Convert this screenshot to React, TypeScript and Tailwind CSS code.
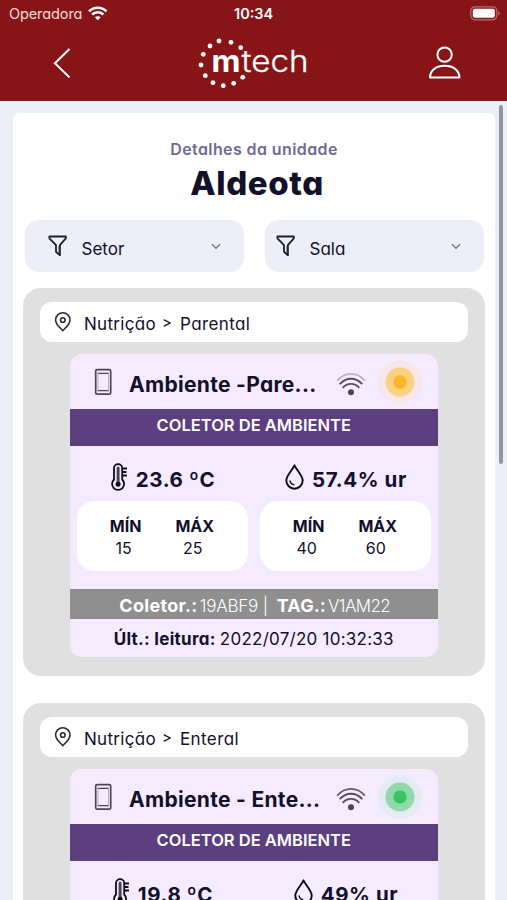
// Unit details screen: filters on top, then one group per sector / room,
// each holding the environment collector card with its latest readings.
import type { ReactNode } from "react";

type Reading = { value: string; min: string; max: string };

type Collector = {
  sector: string;
  room: string;
  name: string;
  status: "warning" | "ok";
  weakSignal: boolean;
  temperature: Reading;
  humidity: Reading;
  code: string;
  tag: string;
  lastReading: string;
};

const collectors: Collector[] = [
  {
    sector: "Nutrição",
    room: "Parental",
    name: "Ambiente -Pare...",
    status: "warning",
    weakSignal: true,
    temperature: { value: "23.6 ºC", min: "15", max: "25" },
    humidity: { value: "57.4% ur", min: "40", max: "60" },
    code: "19ABF9",
    tag: "V1AM22",
    lastReading: "2022/07/20 10:32:33",
  },
  {
    sector: "Nutrição",
    room: "Enteral",
    name: "Ambiente - Ente...",
    status: "ok",
    weakSignal: false,
    temperature: { value: "19.8 ºC", min: "15", max: "25" },
    humidity: { value: "49% ur", min: "40", max: "60" },
    code: "19ABF9",
    tag: "V1AM23",
    lastReading: "2022/07/20 10:32:33",
  },
];

export default function App() {
  return (
    <div className="relative h-[900px] w-[507px] overflow-hidden bg-[#eceef8] font-['Inter',sans-serif] whitespace-nowrap text-[#12102a] [font-feature-settings:'cv11']">
      <Header />
      <main className="mt-3 ml-[13px] w-[482px] rounded-t-md bg-white px-2.5 pt-[25px]">
        <p className="text-center text-[16px] leading-[22px] font-semibold tracking-[0.4px] text-[#6e6b96]">Detalhes da unidade</p>
        <h1 className="pt-0.5 pb-0.5 pl-1.5 text-center text-[33px] leading-[42px] font-extrabold tracking-[0.6px]">Aldeota</h1>
        <div className="mt-[14px] flex justify-between px-[1.5px]">
          <Filter label="Setor" className="pl-[23px]" />
          <Filter label="Sala" className="pl-[11px]" />
        </div>
        <div className="mt-4 flex flex-col gap-[27px]">
          {collectors.map((c) => (
            <Group key={c.room} collector={c} />
          ))}
        </div>
      </main>
      <div className="absolute top-[105px] left-[499px] h-[359px] w-1 rounded-full bg-[#93959f]" />
    </div>
  );
}

function Header() {
  return (
    <header className="h-[101px] bg-[#871417] text-white">
      <div className="flex h-[27px] items-center pr-[6px] pl-[9px]">
        <span className="w-[79px] pt-px text-[14.5px] tracking-[-0.1px] text-[#f6dcd8]">Operadora</span>
        <StatusWifi />
        <span className="ml-[126px] flex-1 pt-px text-[14.5px] font-semibold">10:34</span>
        <Battery />
      </div>
      <div className="flex h-[74px] items-start">
        <svg className="mt-[20px] ml-[52px]" width="20" height="32" viewBox="0 0 20 32" fill="none" stroke="currentColor" strokeWidth="2">
          <path d="M17.5 2 2.9 16.2 17.5 30.4" />
        </svg>
        <Logo />
        <svg className="mt-[18px] ml-[114px]" width="34" height="36" viewBox="0 0 34 36" fill="none" stroke="currentColor" strokeWidth="2">
          <circle cx="16.6" cy="9.6" r="7.2" />
          <path d="M2 32.4C2 25 8.6 20.8 16.7 20.8S31.4 25 31.4 32.4Z" strokeLinejoin="round" />
        </svg>
      </div>
    </header>
  );
}

function Filter({ label, className }: { label: string; className: string }) {
  return (
    <button className={`flex h-[52px] w-[219px] items-center rounded-[14px] bg-[#eceef8] pr-[23px] ${className}`}>
      <svg width="20" height="22" viewBox="0 0 20 22" fill="none" stroke="#1d1b30" strokeWidth="1.8" strokeLinejoin="round">
        <path d="M1.4 1.5h16.4v1.9l-5.9 6.8v10l-3.9-3.4v-6.6L1.4 3.4Z" />
        <path d="M10.6 11v7" strokeWidth="1" stroke="#8a8998" />
      </svg>
      <span className="mt-[7px] ml-[14px] flex-1 text-left text-[17px]">{label}</span>
      <svg width="10" height="7" viewBox="0 0 10 7" fill="none" stroke="#777985" strokeWidth="1.4">
        <path d="m1 1.2 4 4 4-4" />
      </svg>
    </button>
  );
}

function Group({ collector: c }: { collector: Collector }) {
  return (
    <section className="h-[388px] rounded-[18px] bg-[#e0e0e0] px-[17px] pt-[14px]">
      <div className="flex h-10 items-center rounded-[12px] bg-white pl-[14px] text-[17px]">
        <svg width="18" height="20" viewBox="0 0 18 20" fill="none" stroke="#2a293b" strokeWidth="1.6">
          <path d="M8.8 18.6C6 15.8 1.6 12.4 1.6 8a7.2 7.2 0 0 1 14.4 0c0 4.4-4.4 7.8-7.2 10.6Z" />
          <circle cx="8.8" cy="8" r="2.3" />
        </svg>
        <span className="mt-[5px] ml-3 w-[78px] tracking-[0.3px]">{c.sector}</span>
        <span className="mt-[3px] w-[18px] text-[15px]">&gt;</span>
        <span className="mt-[5px] tracking-[0.4px]">{c.room}</span>
      </div>

      <article className="mt-3 ml-[30px] h-[303px] w-[367.5px] overflow-hidden rounded-[12px] bg-[#f5ebfe]">
        <div className="flex h-[55px] items-center pl-6">
          <DeviceIcon />
          <span className="mt-[6px] ml-4 w-[207px] text-[21px] font-bold tracking-[0.3px]">{c.name}</span>
          <SignalIcon weak={c.weakSignal} />
          <StatusDot status={c.status} />
        </div>
        <div className="h-[37px] bg-[#5c3f7f] text-center text-[16.5px] leading-[33px] font-semibold text-white">COLETOR DE AMBIENTE</div>
        <div className="flex gap-3 px-[6.5px]">
          <Metric icon={<ThermometerIcon />} reading={c.temperature} />
          <Metric icon={<DropIcon />} reading={c.humidity} />
        </div>
        <div className="mt-[18px] flex h-[30px] items-center justify-center bg-[#8f8f8f] pt-0.5 pl-0.5 text-white">
          <span className="pr-0.5 text-[18px] font-bold tracking-[0.3px]">Coletor.:</span>
          <span className="pt-[3px] text-[17px] font-light tracking-[-0.2px]">{c.code} |</span>
          <span className="ml-[9px] pr-0.5 text-[18px] font-bold tracking-[0.1px]">TAG.:</span>
          <span className="pt-[3px] text-[17px] font-light tracking-[-0.6px]">{c.tag}</span>
        </div>
        <div className="flex h-[38px] items-center justify-center gap-1 pt-1 text-[17px]">
          <b className="tracking-[0.3px]">Últ.: leitura:</b>
          <span className="tracking-[0.25px]">{c.lastReading}</span>
        </div>
      </article>
    </section>
  );
}

function Metric({ icon, reading }: { icon: ReactNode; reading: Reading }) {
  return (
    <div className="w-[171px]">
      <div className="flex h-[55px] items-center justify-center gap-2 pt-[7px] pl-0.5">
        {icon}
        <span className="pt-1.5 text-[20.5px] font-bold tracking-[0.6px]">{reading.value}</span>
      </div>
      <div className="flex h-[70px] justify-center gap-[34px] rounded-[18px] bg-white pt-[14px] text-center leading-[22px]">
        <div>
          <p className="text-[16px] font-bold">MÍN</p>
          <p className="pr-1 text-[16px]">{reading.min}</p>
        </div>
        <div>
          <p className="text-[16px] font-bold">MÁX</p>
          <p className="pr-1 text-[16px]">{reading.max}</p>
        </div>
      </div>
    </div>
  );
}

function Logo() {
  const dots = [
    [21, 14], [33, 15.3], [42.7, 20.7], [12, 19], [5.3, 27.3], [3, 38],
    [7.3, 48.7], [15, 55.7], [25.3, 58.7], [35.7, 56.3], [44.7, 50.3],
  ];
  return (
    <svg className="ml-[126px]" width="116" height="70" viewBox="0 0 116 70" fill="white">
      {dots.map(([x, y]) => (
        <circle key={`${x}-${y}`} cx={x} cy={y} r="2.4" />
      ))}
      <text x="13.5" y="45" fontSize="30" fontWeight="700" textLength="29" lengthAdjust="spacingAndGlyphs">m</text>
      <text x="43.5" y="45" fontSize="30" fontWeight="300" stroke="white" strokeWidth=".3" textLength="67" lengthAdjust="spacingAndGlyphs">tech</text>
    </svg>
  );
}

function StatusWifi() {
  return (
    <svg width="20" height="15" viewBox="0 0 20 15" fill="none" stroke="white" strokeWidth="2.5">
      <path d="M1 5.3C6 .5 13.5.5 18.5 5.3" />
      <path d="M4.1 8.5c3.3-3 8-3 11.3 0" />
      <path d="M9.75 14.3 6.8 11.3c1.7-1.5 4.2-1.5 5.9 0Z" fill="white" stroke="none" />
    </svg>
  );
}

function Battery() {
  return (
    <svg width="31" height="15" viewBox="0 0 31 15" fill="none">
      <rect x=".8" y=".8" width="26" height="13" rx="4" stroke="#bd6f70" strokeWidth="1.2" />
      <rect x="2.8" y="2.8" width="22" height="9" rx="2" fill="white" />
      <path d="M28.3 5c2 .8 2 3.8 0 4.6Z" fill="#bd6f70" />
    </svg>
  );
}

function DeviceIcon() {
  return (
    <svg width="19" height="28" viewBox="0 0 19 28" fill="none" stroke="#4d4556">
      <rect x="1.7" y="1.7" width="15" height="24.5" rx="1.5" strokeWidth="1.7" />
      <path d="M3.5 5.3h11.4M3.5 22.6h11.4" strokeWidth="1.3" />
      <path d="M4 5v18M14.5 5v18" stroke="#a79daf" strokeWidth=".8" />
    </svg>
  );
}

function SignalIcon({ weak }: { weak: boolean }) {
  return (
    <svg className="mt-1" width="30" height="24" viewBox="0 0 30 24" fill="none" stroke="#554d5e" strokeWidth="1.8">
      <path d="M1.2 8.6c7.8-9 19.8-9 27.6 0" stroke={weak ? "#b9b0c0" : "#665e6d"} />
      <path d="M3.7 12.2c6.5-7.3 16.1-7.3 22.6 0" />
      <path d="M6.7 15.8c4.7-5.2 11.9-5.2 16.6 0" />
      <circle cx="15" cy="20.3" r="3" fill="#4d4556" stroke="none" />
    </svg>
  );
}

function StatusDot({ status }: { status: Collector["status"] }) {
  const [halo, ring, core] = status === "ok" ? ["#e5ebf2", "#91d8ab", "#3bc466"] : ["#f7e6ea", "#f9d182", "#fbb824"];
  return (
    <svg className="ml-3" width="44" height="44" viewBox="0 0 44 44">
      <circle cx="22" cy="22" r="22" fill={halo} />
      <circle cx="22" cy="22" r="14.5" fill={ring} />
      <circle cx="22" cy="22" r="6.7" fill={core} />
    </svg>
  );
}

function ThermometerIcon() {
  return (
    <svg width="17" height="28" viewBox="0 0 17 28" fill="none" stroke="#0d0b18" strokeWidth="1.8">
      <path d="M3 16.5V5.3a4.1 4.1 0 0 1 8.2 0v11.2a6 6 0 1 1-8.2 0Z" />
      <path d="M7.1 5v16" stroke="#4a4555" strokeWidth="3" strokeLinecap="round" />
      <circle cx="7.1" cy="21.2" r="2.5" fill="#0d0b18" stroke="none" />
      <path d="M11 5.5h5M11 9h4.5M11 12.5h5" />
    </svg>
  );
}

function DropIcon() {
  return (
    <svg width="19" height="26" viewBox="0 0 19 26" fill="none" stroke="#0d0b18" strokeWidth="1.9">
      <path d="M9.5 1.3C7.5 6 1.3 11.5 1.3 16.5a8.2 8.2 0 0 0 16.4 0C17.7 11.5 11.5 6 9.5 1.3Z" strokeLinejoin="round" />
      <path d="M5 16.5c.4 2.7 1.9 4 4.3 4.3" strokeWidth="1.5" />
    </svg>
  );
}
